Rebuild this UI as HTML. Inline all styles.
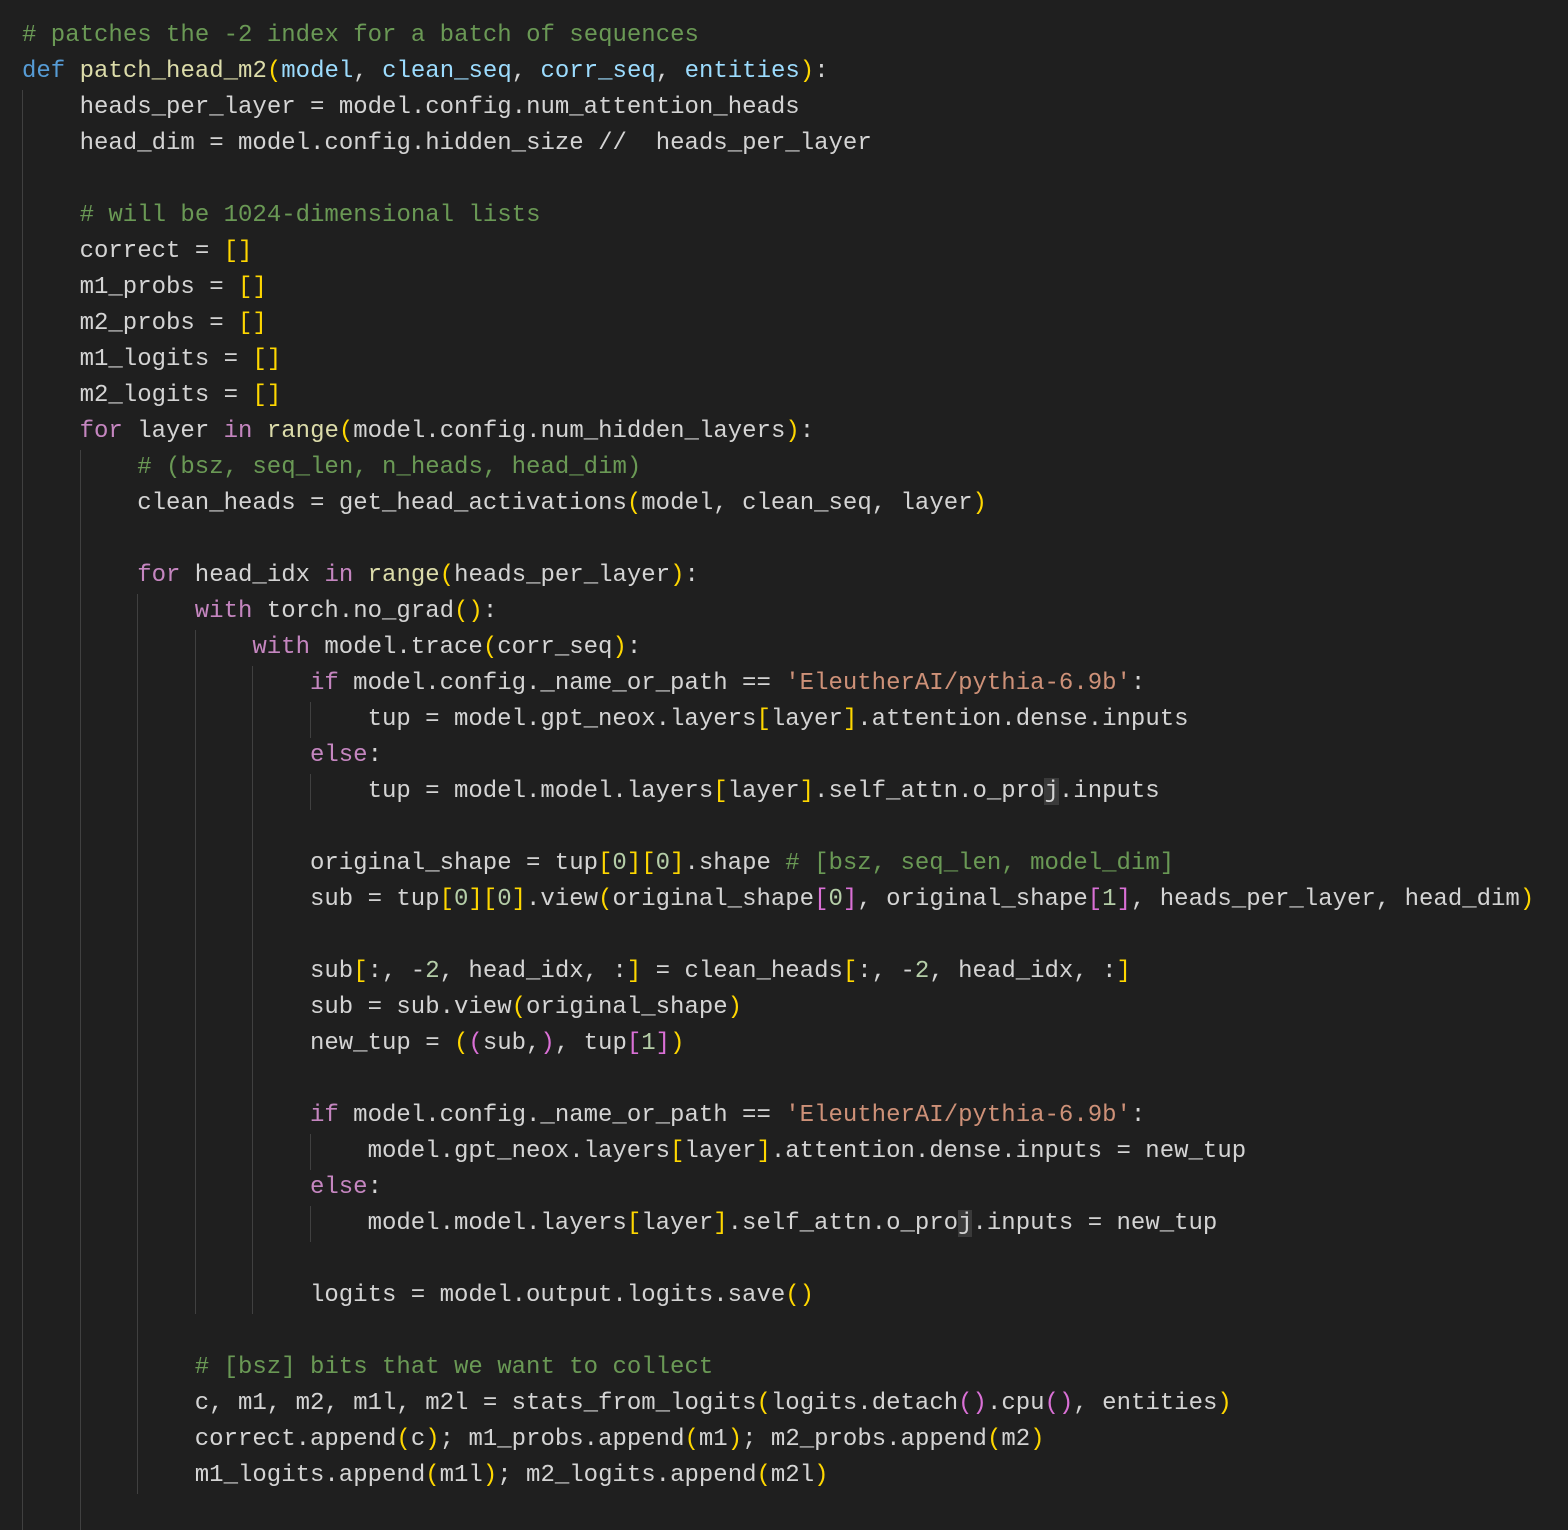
<!DOCTYPE html>
<html><head><meta charset="utf-8">
<style>
html,body{margin:0;padding:0;background:#1f1f1f;}
body{width:1568px;height:1510px;overflow:hidden;position:relative;}
.code{position:absolute;left:22px;top:18px;font-family:"Liberation Mono",monospace;font-size:24px;line-height:36px;color:#d4d4d4;}
.l{height:36px;white-space:pre;}
.g{display:inline-block;width:57.6px;height:36px;vertical-align:top;box-shadow:inset 1px 0 0 #404040;}
.c{color:#6a9955}.k{color:#569cd6}.f{color:#dcdcaa}.p{color:#9cdcfe}.m{color:#c586c0}
.s{color:#ce9178}.n{color:#b5cea8}.y{color:#ffd700}.v{color:#da70d6}
.cur{background:#3a3a3a;}
</style></head><body>
<div class="code"><div class="l"><span class="c"># patches the -2 index for a batch of sequences</span></div><div class="l"><span class="k">def</span> <span class="f">patch_head_m2</span><span class="y">(</span><span class="p">model</span>, <span class="p">clean_seq</span>, <span class="p">corr_seq</span>, <span class="p">entities</span><span class="y">)</span>:</div><div class="l"><span class="g"></span>heads_per_layer = model.config.num_attention_heads</div><div class="l"><span class="g"></span>head_dim = model.config.hidden_size //  heads_per_layer</div><div class="l"><span class="g"></span></div><div class="l"><span class="g"></span><span class="c"># will be 1024-dimensional lists</span></div><div class="l"><span class="g"></span>correct = <span class="y">[]</span></div><div class="l"><span class="g"></span>m1_probs = <span class="y">[]</span></div><div class="l"><span class="g"></span>m2_probs = <span class="y">[]</span></div><div class="l"><span class="g"></span>m1_logits = <span class="y">[]</span></div><div class="l"><span class="g"></span>m2_logits = <span class="y">[]</span></div><div class="l"><span class="g"></span><span class="m">for</span> layer <span class="m">in</span> <span class="f">range</span><span class="y">(</span>model.config.num_hidden_layers<span class="y">)</span>:</div><div class="l"><span class="g"></span><span class="g"></span><span class="c"># (bsz, seq_len, n_heads, head_dim)</span></div><div class="l"><span class="g"></span><span class="g"></span>clean_heads = get_head_activations<span class="y">(</span>model, clean_seq, layer<span class="y">)</span></div><div class="l"><span class="g"></span><span class="g"></span></div><div class="l"><span class="g"></span><span class="g"></span><span class="m">for</span> head_idx <span class="m">in</span> <span class="f">range</span><span class="y">(</span>heads_per_layer<span class="y">)</span>:</div><div class="l"><span class="g"></span><span class="g"></span><span class="g"></span><span class="m">with</span> torch.no_grad<span class="y">()</span>:</div><div class="l"><span class="g"></span><span class="g"></span><span class="g"></span><span class="g"></span><span class="m">with</span> model.trace<span class="y">(</span>corr_seq<span class="y">)</span>:</div><div class="l"><span class="g"></span><span class="g"></span><span class="g"></span><span class="g"></span><span class="g"></span><span class="m">if</span> model.config._name_or_path == <span class="s">'EleutherAI/pythia-6.9b'</span>:</div><div class="l"><span class="g"></span><span class="g"></span><span class="g"></span><span class="g"></span><span class="g"></span><span class="g"></span>tup = model.gpt_neox.layers<span class="y">[</span>layer<span class="y">]</span>.attention.dense.inputs</div><div class="l"><span class="g"></span><span class="g"></span><span class="g"></span><span class="g"></span><span class="g"></span><span class="m">else</span>:</div><div class="l"><span class="g"></span><span class="g"></span><span class="g"></span><span class="g"></span><span class="g"></span><span class="g"></span>tup = model.model.layers<span class="y">[</span>layer<span class="y">]</span>.self_attn.o_pro<span class="cur">j</span>.inputs</div><div class="l"><span class="g"></span><span class="g"></span><span class="g"></span><span class="g"></span><span class="g"></span></div><div class="l"><span class="g"></span><span class="g"></span><span class="g"></span><span class="g"></span><span class="g"></span>original_shape = tup<span class="y">[</span><span class="n">0</span><span class="y">][</span><span class="n">0</span><span class="y">]</span>.shape <span class="c"># [bsz, seq_len, model_dim]</span></div><div class="l"><span class="g"></span><span class="g"></span><span class="g"></span><span class="g"></span><span class="g"></span>sub = tup<span class="y">[</span><span class="n">0</span><span class="y">][</span><span class="n">0</span><span class="y">]</span>.view<span class="y">(</span>original_shape<span class="v">[</span><span class="n">0</span><span class="v">]</span>, original_shape<span class="v">[</span><span class="n">1</span><span class="v">]</span>, heads_per_layer, head_dim<span class="y">)</span></div><div class="l"><span class="g"></span><span class="g"></span><span class="g"></span><span class="g"></span><span class="g"></span></div><div class="l"><span class="g"></span><span class="g"></span><span class="g"></span><span class="g"></span><span class="g"></span>sub<span class="y">[</span>:, -<span class="n">2</span>, head_idx, :<span class="y">]</span> = clean_heads<span class="y">[</span>:, -<span class="n">2</span>, head_idx, :<span class="y">]</span></div><div class="l"><span class="g"></span><span class="g"></span><span class="g"></span><span class="g"></span><span class="g"></span>sub = sub.view<span class="y">(</span>original_shape<span class="y">)</span></div><div class="l"><span class="g"></span><span class="g"></span><span class="g"></span><span class="g"></span><span class="g"></span>new_tup = <span class="y">(</span><span class="v">(</span>sub,<span class="v">)</span>, tup<span class="v">[</span><span class="n">1</span><span class="v">]</span><span class="y">)</span></div><div class="l"><span class="g"></span><span class="g"></span><span class="g"></span><span class="g"></span><span class="g"></span></div><div class="l"><span class="g"></span><span class="g"></span><span class="g"></span><span class="g"></span><span class="g"></span><span class="m">if</span> model.config._name_or_path == <span class="s">'EleutherAI/pythia-6.9b'</span>:</div><div class="l"><span class="g"></span><span class="g"></span><span class="g"></span><span class="g"></span><span class="g"></span><span class="g"></span>model.gpt_neox.layers<span class="y">[</span>layer<span class="y">]</span>.attention.dense.inputs = new_tup</div><div class="l"><span class="g"></span><span class="g"></span><span class="g"></span><span class="g"></span><span class="g"></span><span class="m">else</span>:</div><div class="l"><span class="g"></span><span class="g"></span><span class="g"></span><span class="g"></span><span class="g"></span><span class="g"></span>model.model.layers<span class="y">[</span>layer<span class="y">]</span>.self_attn.o_pro<span class="cur">j</span>.inputs = new_tup</div><div class="l"><span class="g"></span><span class="g"></span><span class="g"></span><span class="g"></span><span class="g"></span></div><div class="l"><span class="g"></span><span class="g"></span><span class="g"></span><span class="g"></span><span class="g"></span>logits = model.output.logits.save<span class="y">()</span></div><div class="l"><span class="g"></span><span class="g"></span><span class="g"></span></div><div class="l"><span class="g"></span><span class="g"></span><span class="g"></span><span class="c"># [bsz] bits that we want to collect</span></div><div class="l"><span class="g"></span><span class="g"></span><span class="g"></span>c, m1, m2, m1l, m2l = stats_from_logits<span class="y">(</span>logits.detach<span class="v">()</span>.cpu<span class="v">()</span>, entities<span class="y">)</span></div><div class="l"><span class="g"></span><span class="g"></span><span class="g"></span>correct.append<span class="y">(</span>c<span class="y">)</span>; m1_probs.append<span class="y">(</span>m1<span class="y">)</span>; m2_probs.append<span class="y">(</span>m2<span class="y">)</span></div><div class="l"><span class="g"></span><span class="g"></span><span class="g"></span>m1_logits.append<span class="y">(</span>m1l<span class="y">)</span>; m2_logits.append<span class="y">(</span>m2l<span class="y">)</span></div><div class="l"><span class="g"></span><span class="g"></span></div></div>
</body></html>
